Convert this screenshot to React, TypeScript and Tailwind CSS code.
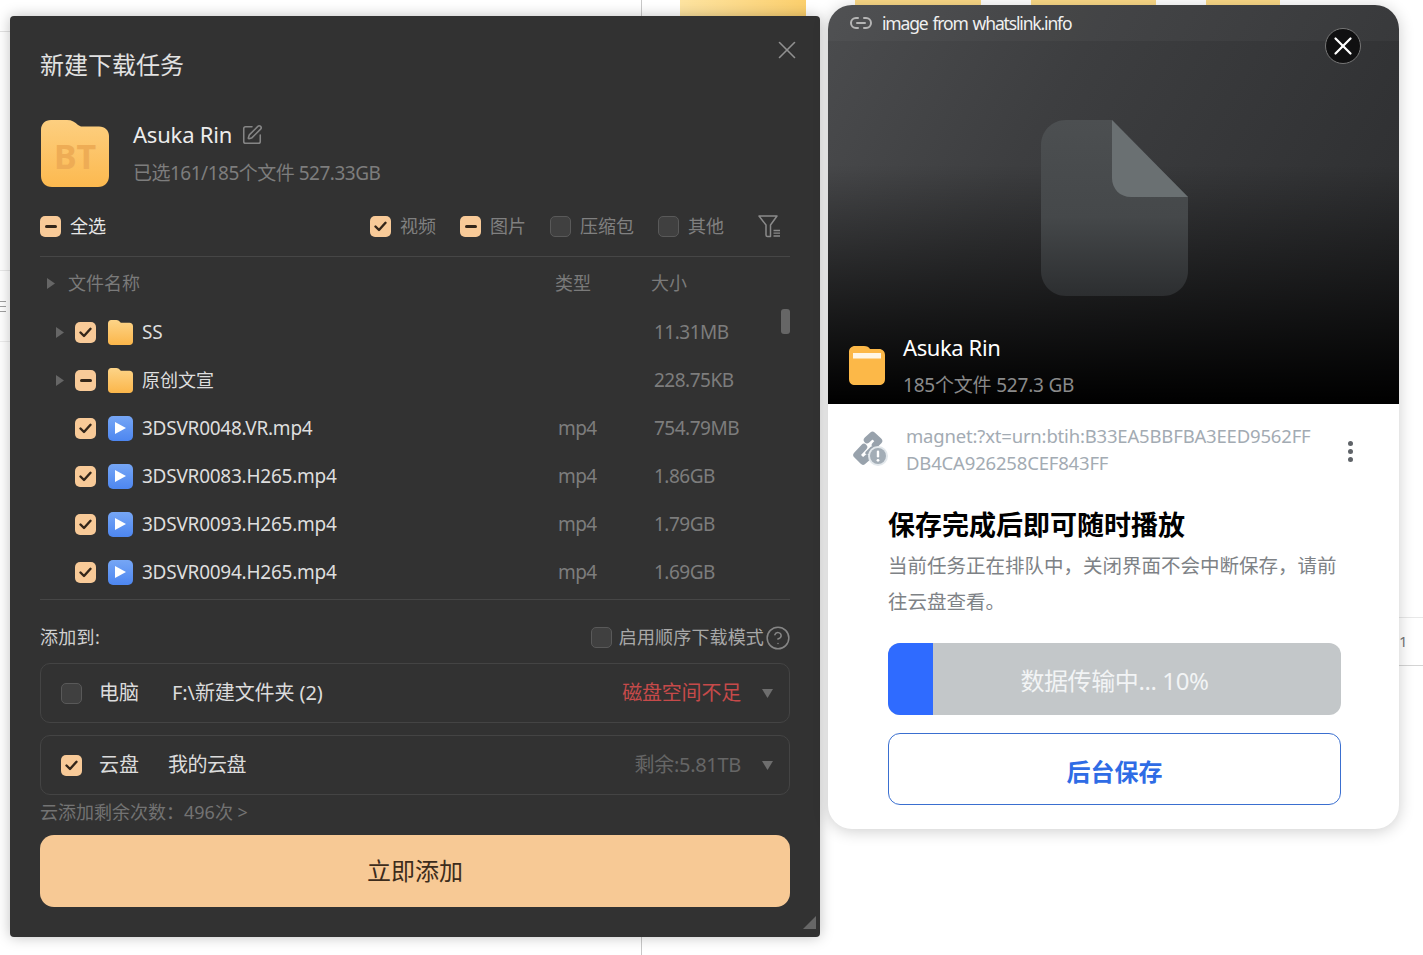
import { CircleHelp, Link2, SquarePen, X } from 'lucide-react';

const FONT = { fontFamily: '"Noto Sans", "Noto Sans CJK SC", sans-serif' };

type CheckState = 'on' | 'mixed' | 'off';

const FILES: { name: string; type: string; size: string; kind: 'folder' | 'video'; state: CheckState }[] = [
  { name: 'SS', type: '', size: '11.31MB', kind: 'folder', state: 'on' },
  { name: '原创文宣', type: '', size: '228.75KB', kind: 'folder', state: 'mixed' },
  { name: '3DSVR0048.VR.mp4', type: 'mp4', size: '754.79MB', kind: 'video', state: 'on' },
  { name: '3DSVR0083.H265.mp4', type: 'mp4', size: '1.86GB', kind: 'video', state: 'on' },
  { name: '3DSVR0093.H265.mp4', type: 'mp4', size: '1.79GB', kind: 'video', state: 'on' },
  { name: '3DSVR0094.H265.mp4', type: 'mp4', size: '1.69GB', kind: 'video', state: 'on' },
];

function Check({ state }: { state: CheckState }) {
  if (state === 'off') {
    return <span className="h-[21px] w-[21px] shrink-0 rounded-[5px] border border-[#595959] bg-[#404040]" />;
  }
  return (
    <span className="flex h-[21px] w-[21px] shrink-0 items-center justify-center rounded-[5px] bg-[#f8ca98]">
      {state === 'on' ? (
        <svg width="13" height="11" viewBox="0 0 13 11" fill="none">
          <path d="M1.5 5.5L5 9L11.5 1.8" stroke="#33261a" strokeWidth="2.4" strokeLinecap="round" strokeLinejoin="round" />
        </svg>
      ) : (
        <span className="h-[3px] w-[12px] rounded-full bg-[#33261a]" />
      )}
    </span>
  );
}

function Arrow({ className }: { className: string }) {
  return (
    <svg width="8" height="11" viewBox="0 0 8 11" className={className}>
      <path d="M0 0L8 5.5L0 11Z" fill="#666666" />
    </svg>
  );
}

function SmallFolder() {
  return (
    <svg width="25" height="25" viewBox="0 0 25 25" className="shrink-0">
      <defs>
        <linearGradient id="sf" x1="0" y1="0" x2="0" y2="1">
          <stop offset="0" stopColor="#fdd488" />
          <stop offset="1" stopColor="#fbb64a" />
        </linearGradient>
      </defs>
      <path d="M0 3.5C0 1.5 1.4 0 3.2 0H8.5C10 0 10.8 .7 11.8 1.8L12.8 2.8H21.5C23.5 2.8 25 4.2 25 6.2V21.5C25 23.5 23.5 25 21.5 25H3.5C1.5 25 0 23.5 0 21.5Z" fill="url(#sf)" />
    </svg>
  );
}

function VideoIcon() {
  return (
    <span className="flex h-[25px] w-[25px] shrink-0 items-center justify-center rounded-[5px] bg-gradient-to-b from-[#76a6f5] to-[#4d86f0]">
      <svg width="11" height="12" viewBox="0 0 11 12">
        <path d="M0 0L11 6L0 12Z" fill="#ffffff" />
      </svg>
    </span>
  );
}

function BtFolder() {
  return (
    <div className="relative h-[67px] w-[68px] shrink-0">
      <svg width="68" height="67" viewBox="0 0 68 67" className="block">
        <defs>
          <linearGradient id="bt" x1="0" y1="0" x2="0" y2="1">
            <stop offset="0" stopColor="#fdcf80" />
            <stop offset="1" stopColor="#fcb94f" />
          </linearGradient>
        </defs>
        <path d="M0 10C0 4 4 0 10 0H26C31 0 34 2 37 5L40 6.5H58C64 6.5 68 10.5 68 16V56C68 62.5 63.5 67 57 67H11C4.5 67 0 62.5 0 56Z" fill="url(#bt)" />
      </svg>
      <span className="absolute inset-x-0 top-[14px] text-center text-[34px] leading-[45px] font-bold text-[#eeac55]">BT</span>
    </div>
  );
}

function FilterIcon() {
  return (
    <svg width="23" height="23" viewBox="0 0 23 23" fill="none" stroke="#8a8a8a" strokeWidth="1.5">
      <path d="M1 1H19L12.5 10V21.5H9.5C8.5 21.5 8 21 8 20V10Z" strokeLinejoin="round" />
      <path d="M15.5 15.5H22M15.5 18.2H22M15.5 21H22" strokeWidth="1.3" />
    </svg>
  );
}

function TypeFilter({ label, state }: { label: string; state: CheckState }) {
  return (
    <div className="flex items-center gap-[9px]">
      <Check state={state} />
      <span className="text-[18px] text-[#808080]">{label}</span>
    </div>
  );
}

function Dropdown() {
  return (
    <svg width="11" height="9" viewBox="0 0 11 9" className="ml-[21px] shrink-0">
      <path d="M0 0H11L5.5 9Z" fill="#6e6e6e" />
    </svg>
  );
}

function DownloadDialog() {
  return (
    <div className="absolute top-[16px] left-[10px] flex h-[921px] w-[810px] flex-col rounded-[4px] bg-[#323232] px-[30px] shadow-[0_0_14px_rgba(0,0,0,0.25)]">
      <X className="absolute top-[19px] right-[18px] h-[30px] w-[30px] text-[#909090]" strokeWidth={1.3} />
      <h1 className="mt-[30px] h-[38px] text-[24px] leading-[38px] text-[#e2e2e2]">新建下载任务</h1>

      <div className="mt-[36px] flex h-[67px] items-start gap-[24px] pl-[1px]">
        <BtFolder />
        <div>
          <div className="flex h-[30px] items-center gap-[9px]">
            <span className="-mt-[2px] text-[22px] leading-[30px] tracking-[-0.2px] text-[#ececec]">Asuka Rin</span>
            <SquarePen className="h-[22px] w-[22px] text-[#858585]" strokeWidth={1.7} />
          </div>
          <p className="mt-[8px] text-[19px] leading-[30px] tracking-[-0.5px] text-[#7d7d7d]">已选161/185个文件 527.33GB</p>
        </div>
      </div>

      <div className="mt-[24px] flex h-[46px] items-start justify-between border-b border-[#464646] pb-[15px]">
        <div className="flex h-[30px] items-center gap-[9px]">
          <Check state="mixed" />
          <span className="text-[18px] text-[#e6e6e6]">全选</span>
        </div>
        <div className="flex h-[30px] items-center">
          <div className="flex items-center gap-[24px]">
            <TypeFilter label="视频" state="on" />
            <TypeFilter label="图片" state="mixed" />
            <TypeFilter label="压缩包" state="off" />
            <TypeFilter label="其他" state="off" />
          </div>
          <span className="mr-[9px] ml-[34px]">
            <FilterIcon />
          </span>
        </div>
      </div>

      <div className="flex h-[51px] shrink-0 items-center pt-[2px] text-[18px] text-[#7a7a7a]">
        <Arrow className="ml-[7px]" />
        <span className="ml-[13px] w-[487px]">文件名称</span>
        <span className="w-[96px]">类型</span>
        <span>大小</span>
      </div>

      <div className="relative border-b border-[#464646] pb-[3px]">
        {FILES.map((file) => (
          <div key={file.name} className="flex h-[48px] items-center">
            <span className="flex w-[35px] shrink-0 pl-[16px]">{file.kind === 'folder' && <Arrow className="" />}</span>
            <Check state={file.state} />
            <span className="ml-[12px] flex w-[25px] shrink-0 justify-center">
              {file.kind === 'folder' ? <SmallFolder /> : <VideoIcon />}
            </span>
            <span className="ml-[9px] w-[416px] shrink-0 text-[19px] tracking-[-0.25px] text-[#dedede]">
              {file.name === '原创文宣' ? <span className="text-[18px] tracking-normal">{file.name}</span> : file.name}
            </span>
            <span className="w-[96px] shrink-0 text-[19px] tracking-[-0.6px] text-[#7d7d7d]">{file.type}</span>
            <span className="text-[19px] tracking-[-0.5px] text-[#7d7d7d]">{file.size}</span>
          </div>
        ))}
        <span className="absolute top-[1px] right-0 h-[25px] w-[9px] rounded-[3px] bg-[#666666]" />
      </div>

      <div className="flex h-[63px] shrink-0 items-center justify-between pt-[12px]">
        <span className="text-[18px] tracking-[0.3px] text-[#d0d0d0]">添加到:</span>
        <div className="flex items-center">
          <Check state="off" />
          <span className="ml-[7px] text-[18px] tracking-[0.15px] text-[#a8a8a8]">启用顺序下载模式</span>
          <CircleHelp className="-mr-[1px] ml-[1px] h-[26px] w-[26px] text-[#868686]" strokeWidth={1.4} />
        </div>
      </div>

      <div className="flex h-[60px] shrink-0 items-center rounded-[10px] border border-[#444444] pr-[16px] pl-[20px]">
        <Check state="off" />
        <span className="ml-[17px] w-[73px] text-[20px] text-[#dcdcdc]">电脑</span>
        <span className="flex-1 text-[20px] tracking-[-0.1px] text-[#dcdcdc]">F:\新建文件夹 (2)</span>
        <span className="text-[20px] tracking-[-0.2px] text-[#c64a4a]">磁盘空间不足</span>
        <Dropdown />
      </div>

      <div className="mt-[12px] flex h-[60px] shrink-0 items-center rounded-[10px] border border-[#444444] pr-[16px] pl-[20px]">
        <Check state="on" />
        <span className="ml-[17px] w-[69px] text-[20px] text-[#dcdcdc]">云盘</span>
        <span className="flex-1 text-[20px] tracking-[-0.5px] text-[#dcdcdc]">我的云盘</span>
        <span className="text-[20px] tracking-[-0.3px] text-[#666666]">剩余:5.81TB</span>
        <Dropdown />
      </div>

      <div className="flex h-[40px] shrink-0 items-start pt-[4px] text-[18px] leading-[26px] whitespace-pre text-[#737373]">{'云添加剩余次数\uFF1A496次 >'}</div>

      <button type="button" className="h-[72px] shrink-0 rounded-[14px] bg-[#f7c995] text-[24px] text-[#3d2c1c]">
        立即添加
      </button>

      <svg width="13" height="13" viewBox="0 0 13 13" className="absolute right-[4px] bottom-[8px]">
        <path d="M13 0V13H0Z" fill="#666666" />
      </svg>
    </div>
  );
}

function SavePanel() {
  return (
    <div className="absolute top-[5px] left-[828px] h-[824px] w-[571px] overflow-hidden rounded-[24px] bg-white shadow-[0_2px_16px_rgba(0,0,0,0.2)]">
      <div className="relative flex h-[399px] flex-col justify-between bg-[linear-gradient(180deg,rgba(0,0,0,0)_40%,#000000_100%),linear-gradient(120deg,#4b4c4e_0%,#3d3e40_35%,#2b2c2e_100%)]">
        <div className="flex h-[36px] shrink-0 items-center gap-[9px] bg-white/[0.03] pl-[21px]">
          <Link2 className="h-[24px] w-[24px] text-[#b5b5b5]" strokeWidth={2} />
          <span className="text-[17.5px] tracking-[-1.15px] [word-spacing:1.5px] text-[#f0f0f0]">image from whatslink.info</span>
        </div>
        <span className="absolute top-[23px] right-[38px] flex h-[36px] w-[36px] items-center justify-center rounded-full border border-[#777777] bg-[#101011]">
          <X className="h-[30px] w-[30px] shrink-0 text-white" strokeWidth={1.8} />
        </span>

        <svg width="147" height="176" viewBox="0 0 147 176" className="absolute top-[115px] left-[213px]">
          <defs>
            <linearGradient id="doc" x1="0" y1="0" x2="0" y2="1">
              <stop offset="0" stopColor="#4c4f51" />
              <stop offset="0.55" stopColor="#45484a" />
              <stop offset="1" stopColor="#2c2e30" />
            </linearGradient>
          </defs>
          <path d="M25 0H71L147 77V151C147 165 136 176 122 176H25C11 176 0 165 0 151V25C0 11 11 0 25 0Z" fill="url(#doc)" />
          <path d="M71 0L147 77H90C79 77 71 69 71 58Z" fill="#6a7072" />
        </svg>

        <div className="flex h-[76px] items-center gap-[18px] pb-[3px] pl-[21px]">
          <svg width="36" height="39" viewBox="0 0 36 39" className="mt-[1px]">
            <path d="M0 6C0 2.5 2.5 0 6 0H15C18 0 20 1 21 3H30C33.5 3 36 5.5 36 9V33C36 37 33.5 39 30 39H6C2.5 39 0 37 0 33Z" fill="#fcb848" />
            <rect x="4" y="7" width="28" height="5.5" fill="#fff6e6" />
          </svg>
          <div>
            <p className="text-[22px] leading-[34px] tracking-[-0.4px] text-white">Asuka Rin</p>
            <p className="mt-[7px] text-[19px] leading-[28px] tracking-[-0.2px] text-[#8a8a8a]">185个文件 527.3 GB</p>
          </div>
        </div>
      </div>

      <div className="flex items-start pt-[18px] pr-[40px] pl-[24px]">
        <svg width="36" height="36" viewBox="0 0 36 36" className="mt-[9px] shrink-0">
          <g fill="none" stroke="#98a2ac" strokeWidth="6.5" strokeLinecap="round" strokeLinejoin="round">
            <path d="M15 9L20.5 4L27 10L23 14" />
            <path d="M12 16L4.5 24L11 30.5L15 27" />
            <path d="M20 17L15 22" strokeWidth="3.5" />
          </g>
          <circle cx="26" cy="25" r="10" fill="#e3e8ec" />
          <circle cx="26" cy="25" r="8" fill="#a3adb6" />
          <rect x="24.8" y="19.5" width="2.4" height="7" rx="1.2" fill="#ffffff" />
          <circle cx="26" cy="29.3" r="1.4" fill="#ffffff" />
        </svg>
        <p className="ml-[18px] w-[412px] text-[18.5px] leading-[27px] tracking-[-0.18px] break-all text-[#a3abb3]">
          magnet:?xt=urn:btih:B33EA5BBFBA3EED9562FF DB4CA926258CEF843FF
        </p>
        <span className="mt-[19px] ml-[30px] flex flex-col gap-[3.5px]">
          <span className="h-[4.5px] w-[4.5px] rounded-full bg-[#5f6368]" />
          <span className="h-[4.5px] w-[4.5px] rounded-full bg-[#5f6368]" />
          <span className="h-[4.5px] w-[4.5px] rounded-full bg-[#5f6368]" />
        </span>
      </div>

      <div className="pr-[58px] pl-[60px]">
        <h2 className="mt-[29px] text-[27px] leading-[40px] font-bold text-black">保存完成后即可随时播放</h2>
        <p className="mt-[3px] text-[19.5px] leading-[36px] text-[#7e8286]">
          {'当前任务正在排队中\uFF0C关闭界面不会中断保存\uFF0C请前往云盘查看。'}
        </p>
        <div className="relative mt-[23px] flex h-[72px] items-center justify-center overflow-hidden rounded-[12px] bg-[#c3c7c9] pt-[3px]">
          <span className="absolute inset-y-0 left-0 w-[45px] bg-[#2f6bff]" />
          <span className="text-[24px] tracking-[-0.4px] text-[#f2f4f5]">数据传输中... 10%</span>
        </div>
        <button type="button" className="mt-[18px] h-[72px] w-full rounded-[12px] border border-[#3a6fd0] pt-[6px] text-[24px] font-bold text-[#2f6ce5]">
          后台保存
        </button>
      </div>
    </div>
  );
}

// fragments of the page that sits behind the two windows
function PageBehind() {
  return (
    <>
      <span className="absolute top-0 bottom-0 left-[641px] w-px bg-[#c8c8c8]" />
      <span className="absolute top-0 left-[680px] h-[16px] w-[126px] bg-gradient-to-r from-[#fde3a0] to-[#fbcf6c]" />
      <span className="absolute top-0 left-[855px] h-[5px] w-[126px] bg-[#fbd987]" />
      <span className="absolute top-0 left-[1031px] h-[5px] w-[125px] bg-[#fbd987]" />
      <span className="absolute top-0 left-[1206px] h-[5px] w-[74px] bg-[#fbd987]" />
      <span className="absolute top-[31px] left-0 h-px w-[10px] bg-[#e2e2e2]" />
      <span className="absolute top-[270px] left-0 h-px w-[10px] bg-[#e8e8e8]" />
      <span className="absolute top-[341px] left-0 h-px w-[10px] bg-[#ececec]" />
      <span className="absolute top-[301px] left-0 h-[1px] w-[6px] bg-[#a0a0a0]" />
      <span className="absolute top-[306px] left-0 h-[1px] w-[6px] bg-[#a0a0a0]" />
      <span className="absolute top-[311px] left-0 h-[1px] w-[6px] bg-[#a0a0a0]" />
      <span className="absolute top-[617px] left-[1399px] h-px w-[24px] bg-[#e8e8e8]" />
      <span className="absolute top-[665px] left-[1399px] h-px w-[24px] bg-[#d4d4d4]" />
      <span className="absolute top-[630px] left-[1399px] text-[15px] text-[#777777]">1</span>
    </>
  );
}

export default function App() {
  return (
    <div className="relative h-[955px] w-[1423px] overflow-hidden bg-white" style={FONT}>
      <PageBehind />
      <DownloadDialog />
      <SavePanel />
    </div>
  );
}
